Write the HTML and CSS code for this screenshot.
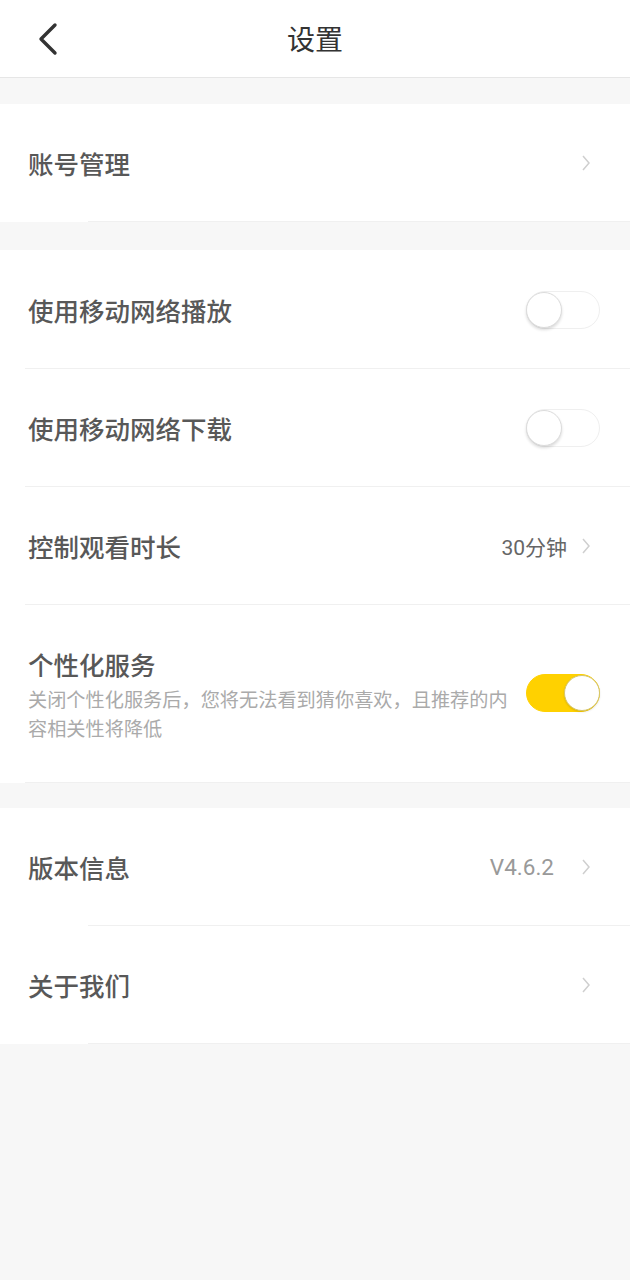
FILE: index.html
```html
<!DOCTYPE html>
<html lang="zh-CN">
<head>
<meta charset="utf-8">
<title>设置</title>
<link rel="stylesheet" href="styles.css">
</head>
<body>
<header class="topbar">
  <div class="back">
    <svg width="30" height="40" viewBox="0 0 30 40"><polyline points="17,5 3,19 17,33" fill="none" stroke="#333" stroke-width="3.4" stroke-linecap="round" stroke-linejoin="round"/></svg>
  </div>
  <h1 class="title">设置</h1>
</header>

<section class="group g1">
  <div class="row inset">
    <span class="label">账号管理</span>
    <span class="right"><svg class="chev" width="10" height="16" viewBox="0 0 10 16"><polyline points="2,1 8,8 2,15" fill="none" stroke="#cfcfcf" stroke-width="1.5"/></svg></span>
  </div>
</section>

<section class="group g2">
  <div class="row">
    <span class="label">使用移动网络播放</span>
    <span class="toggle"><span class="knob"></span></span>
  </div>
  <div class="row">
    <span class="label">使用移动网络下载</span>
    <span class="toggle"><span class="knob"></span></span>
  </div>
  <div class="row">
    <span class="label">控制观看时长</span>
    <span class="right"><span class="value">30分钟</span><svg class="chev" width="10" height="16" viewBox="0 0 10 16"><polyline points="2,1 8,8 2,15" fill="none" stroke="#cfcfcf" stroke-width="1.5"/></svg></span>
  </div>
  <div class="row tall">
    <div class="textcol">
      <span class="label">个性化服务</span>
      <p class="desc">关闭个性化服务后，您将无法看到猜你喜欢，且推荐的内容相关性将降低</p>
    </div>
    <span class="toggle on"><span class="knob"></span></span>
  </div>
</section>

<section class="group g3">
  <div class="row inset">
    <span class="label">版本信息</span>
    <span class="right"><span class="value version">V4.6.2</span><svg class="chev" width="10" height="16" viewBox="0 0 10 16"><polyline points="2,1 8,8 2,15" fill="none" stroke="#cfcfcf" stroke-width="1.5"/></svg></span>
  </div>
  <div class="row inset">
    <span class="label">关于我们</span>
    <span class="right"><svg class="chev" width="10" height="16" viewBox="0 0 10 16"><polyline points="2,1 8,8 2,15" fill="none" stroke="#cfcfcf" stroke-width="1.5"/></svg></span>
  </div>
</section>
</body>
</html>
```

FILE: styles.css
```css
* { box-sizing: border-box; }
html, body {
  margin: 0;
  padding: 0;
  background: #f7f7f7;
  font-family: "Noto Sans CJK SC", "Noto Sans", Roboto, sans-serif;
}
.topbar {
  height: 78px;
  background: #fff;
  border-bottom: 1px solid #e6e6e6;
  display: flex;
  align-items: center;
  justify-content: center;
  position: relative;
}
.back {
  position: absolute;
  left: 38px;
  top: 20px;
  width: 30px;
  height: 40px;
}
.back svg { display: block; }
.title {
  margin: 0;
  font-size: 28px;
  font-weight: 400;
  color: #333;
  line-height: 1;
  margin-top: -2px;
}
.group {
  background: #fff;
}
.g1 { margin-top: 26px; }
.g2 { margin-top: 28px; padding-top: 1px; }
.g3 { margin-top: 25px; }
.row {
  height: 118px;
  display: flex;
  align-items: center;
  justify-content: space-between;
  padding: 0 30px 0 28px;
  position: relative;
}
.row::after {
  content: "";
  position: absolute;
  left: 25px;
  right: 0;
  bottom: 0;
  height: 1px;
  background: #f0f0f0;
}
.row.inset::after { left: 88px; }
.label {
  font-size: 25.5px;
  font-weight: 500;
  color: #585858;
  line-height: 1.2;
}
.right {
  display: flex;
  align-items: center;
}
.value {
  font-size: 21px;
  color: #666;
  margin-right: 14px;
  font-family: Roboto, "Noto Sans CJK SC", sans-serif;
}
.value.version {
  font-size: 22.5px;
  color: #999;
  margin-right: 27px;
}
.chev {
  display: block;
  margin-right: 9px;
}
.toggle {
  width: 74px;
  height: 38px;
  border-radius: 19px;
  border: 1px solid #efefef;
  background: #fff;
  position: relative;
  flex-shrink: 0;
}
.knob {
  position: absolute;
  left: -1px;
  top: 0;
  width: 36px;
  height: 36px;
  border-radius: 50%;
  background: #fff;
  border: 1px solid #dcdcdc;
  box-shadow: 0 2px 3px rgba(0,0,0,0.14);
}
.toggle.on {
  background: #ffd100;
  border-color: #ffd100;
}
.toggle.on .knob {
  left: auto;
  right: -1px;
  border-color: #d6c66a;
  box-shadow: 0 1px 2px rgba(0,0,0,0.12);
}
.row.tall {
  height: 178px;
  align-items: flex-start;
}
.textcol {
  display: flex;
  flex-direction: column;
  padding-top: 44px;
}
.row.tall .toggle { margin-top: 69px; }
.desc {
  margin: 5px 0 0;
  width: 490px;
  font-size: 19.2px;
  line-height: 29px;
  color: #aaa;
}
```
